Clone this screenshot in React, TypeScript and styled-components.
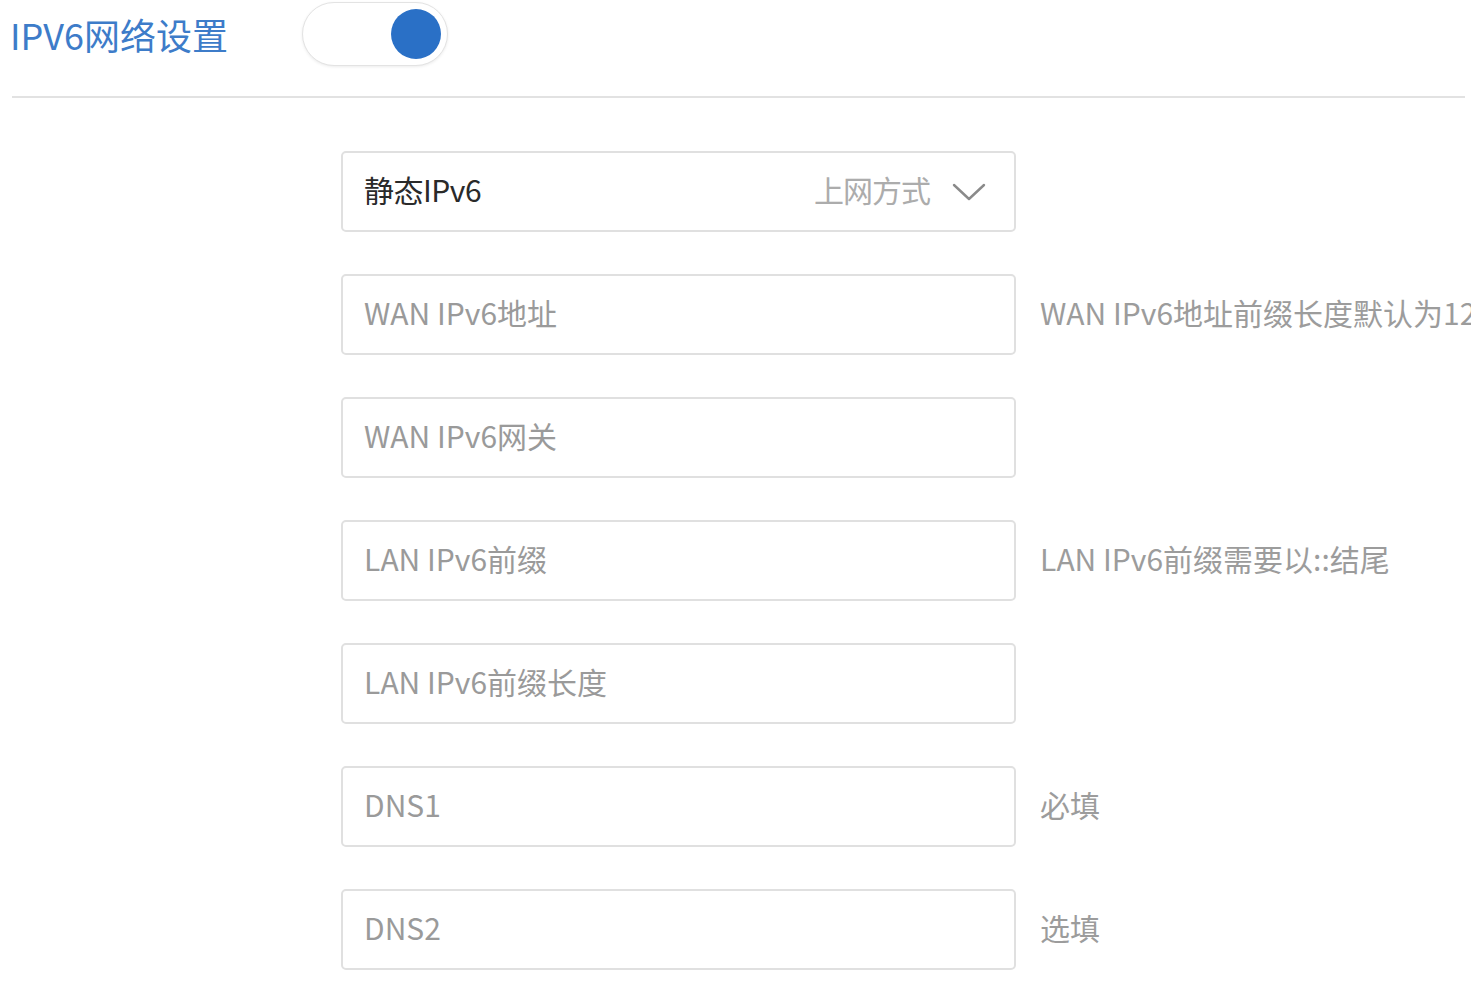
import React from "react";
import styled, { createGlobalStyle } from "styled-components";

const GlobalStyle = createGlobalStyle`
  html, body {
    margin: 0;
    padding: 0;
    background: #ffffff;
    font-family: "Noto Sans CJK SC", "Noto Sans", sans-serif;
  }
`;

const Page = styled.div`
  width: 1471px;
  height: 985px;
  overflow: hidden;
  background: #fff;
`;

const Header = styled.div`
  display: flex;
  align-items: center;
  padding: 2px 0 0 10px;
  height: 64px;
`;

const Title = styled.h1`
  margin: 0;
  width: 292px;
  font-size: 36px;
  font-weight: 400;
  color: #3d7cc9;
  white-space: nowrap;
`;

const Switch = styled.div<{ $on: boolean }>`
  box-sizing: border-box;
  width: 146px;
  height: 64px;
  border-radius: 32px;
  border: 1.5px solid #e3e3e3;
  box-shadow: 0 1px 3px rgba(0, 0, 0, 0.08);
  background: #fff;
  display: flex;
  align-items: center;
  justify-content: ${({ $on }) => ($on ? "flex-end" : "flex-start")};
  padding: 0 6px;
`;

const Knob = styled.div`
  width: 50px;
  height: 50px;
  border-radius: 50%;
  background: #2a70c6;
`;

const Divider = styled.hr`
  margin: 30px 6px 0 12px;
  border: none;
  border-top: 2px solid #e2e2e2;
`;

const Form = styled.div`
  display: flex;
  flex-direction: column;
  gap: 42px;
  padding: 53px 0 0 341px;
`;

const Row = styled.div`
  display: flex;
  align-items: center;
  gap: 24px;
`;

const Field = styled.div`
  box-sizing: border-box;
  flex: 0 0 675px;
  width: 675px;
  height: 81px;
  border: 2px solid #e0e0e0;
  border-radius: 5px;
  display: flex;
  align-items: center;
  padding: 0 28px 5px 21px;
  font-size: 30px;
  white-space: nowrap;
`;

const Value = styled.span<{ $placeholder?: boolean }>`
  flex: 1;
  color: ${({ $placeholder }) => ($placeholder ? "#9a9a9a" : "#2a2a2a")};
  letter-spacing: ${({ $placeholder }) => ($placeholder ? "0" : "-0.5px")};
`;

const Suffix = styled.span`
  color: #acacac;
  margin-right: 22px;
  letter-spacing: -1px;
`;

const Hint = styled.span`
  flex: 0 0 auto;
  font-size: 30px;
  padding-bottom: 5px;
  color: #9c9c9c;
  white-space: nowrap;
`;

const Chevron = () => (
  <svg width="34" height="20" viewBox="0 0 34 20" fill="none" style={{ marginTop: 5 }}>
    <polyline points="2,3 17,17 32,3" stroke="#8a8a8a" strokeWidth="2.4" strokeLinecap="round" strokeLinejoin="round" />
  </svg>
);

const fields = [
  { label: "WAN IPv6地址", hint: "WAN IPv6地址前缀长度默认为128" },
  { label: "WAN IPv6网关" },
  { label: "LAN IPv6前缀", hint: "LAN IPv6前缀需要以::结尾" },
  { label: "LAN IPv6前缀长度" },
  { label: "DNS1", hint: "必填" },
  { label: "DNS2", hint: "选填" },
];

export default function App() {
  return (
    <Page>
      <GlobalStyle />
      <Header>
        <Title>IPV6网络设置</Title>
        <Switch $on>
          <Knob />
        </Switch>
      </Header>
      <Divider />
      <Form>
        <Row>
          <Field>
            <Value>静态IPv6</Value>
            <Suffix>上网方式</Suffix>
            <Chevron />
          </Field>
        </Row>
        {fields.map((f) => (
          <Row key={f.label}>
            <Field>
              <Value $placeholder>{f.label}</Value>
            </Field>
            {f.hint && <Hint>{f.hint}</Hint>}
          </Row>
        ))}
      </Form>
    </Page>
  );
}
